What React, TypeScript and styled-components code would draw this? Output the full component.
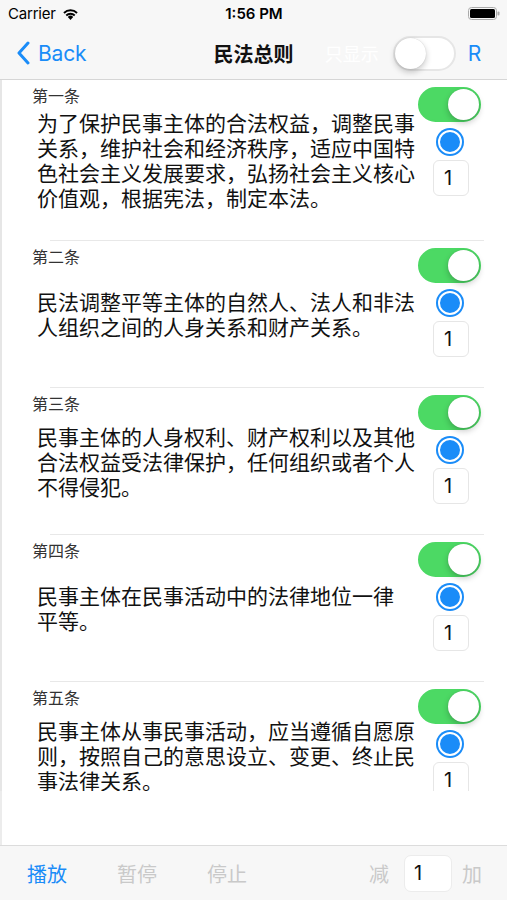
import styled, { createGlobalStyle } from "styled-components";

const GlobalStyle = createGlobalStyle`
  html, body {
    margin: 0;
    padding: 0;
    background: #fff;
  }
  body {
    font-family: Inter, "Noto Sans CJK SC", sans-serif;
    -webkit-font-smoothing: antialiased;
  }
`;

const BLUE = "#1a8cf8";

const articles = [
  {
    title: "第一条",
    lines: [
      "为了保护民事主体的合法权益，调整民事",
      "关系，维护社会和经济秩序，适应中国特",
      "色社会主义发展要求，弘扬社会主义核心",
      "价值观，根据宪法，制定本法。",
    ],
  },
  {
    title: "第二条",
    lines: [
      "民法调整平等主体的自然人、法人和非法",
      "人组织之间的人身关系和财产关系。",
    ],
  },
  {
    title: "第三条",
    lines: [
      "民事主体的人身权利、财产权利以及其他",
      "合法权益受法律保护，任何组织或者个人",
      "不得侵犯。",
    ],
  },
  {
    title: "第四条",
    lines: ["民事主体在民事活动中的法律地位一律", "平等。"],
  },
  {
    title: "第五条",
    lines: [
      "民事主体从事民事活动，应当遵循自愿原",
      "则，按照自己的意思设立、变更、终止民",
      "事法律关系。",
    ],
  },
];

const WifiIcon = () => (
  <svg width="17" height="12" viewBox="0 0 17 12">
    <path d="M8.5 12 L5.8 8.9 A3.9 3.9 0 0 1 11.2 8.9 Z" fill="#000" />
    <path d="M3.6 6.7 A7 7 0 0 1 13.4 6.7 L12.1 8.2 A5 5 0 0 0 4.9 8.2 Z" fill="#000" />
    <path d="M1.3 4.2 A10.3 10.3 0 0 1 15.7 4.2 L14.4 5.7 A8.3 8.3 0 0 0 2.6 5.7 Z" fill="#000" />
  </svg>
);

const BatteryIcon = () => (
  <svg width="32" height="13" viewBox="0 0 32 13">
    <rect x="0.5" y="0.5" width="28" height="12" rx="3" fill="none" stroke="#aaa" />
    <rect x="2" y="2" width="25" height="9" rx="1.5" fill="#000" />
    <rect x="29.5" y="4.5" width="2" height="4" rx="1" fill="#aaa" />
  </svg>
);

const Chevron = () => (
  <svg width="14" height="24" viewBox="0 0 14 24">
    <path
      d="M12 2 L3 12 L12 22"
      fill="none"
      stroke={BLUE}
      strokeWidth="3"
      strokeLinecap="round"
      strokeLinejoin="round"
    />
  </svg>
);

export default function App() {
  return (
    <Page>
      <GlobalStyle />
      <Header>
        <StatusBar>
          <Carrier>
            Carrier <WifiIcon />
          </Carrier>
          <Clock>1:56 PM</Clock>
          <Battery>
            <BatteryIcon />
          </Battery>
        </StatusBar>
        <NavBar>
          <NavLeft>
            <Chevron />
            <NavButton>Back</NavButton>
          </NavLeft>
          <Title>民法总则</Title>
          <NavRight>
            <Ghost>只显示</Ghost>
            <Switch $on={false} />
            <NavButton>R</NavButton>
          </NavRight>
        </NavBar>
      </Header>

      <List>
        {articles.map((a, i) => (
          <Item key={a.title}>
            {i > 0 && <Separator />}
            <Row>
              <Main>
                <Label>{a.title}</Label>
                <Body>
                  {a.lines.map((l) => (
                    <Line key={l}>{l}</Line>
                  ))}
                </Body>
              </Main>
              <Controls>
                <Switch $on />
                <Radio />
                <CountBox>1</CountBox>
              </Controls>
            </Row>
          </Item>
        ))}
      </List>
      <Filler />

      <Toolbar>
        <ToolGroup>
          <ToolButton $active>播放</ToolButton>
          <ToolButton>暂停</ToolButton>
          <ToolButton>停止</ToolButton>
        </ToolGroup>
        <Stepper>
          <ToolButton>减</ToolButton>
          <StepInput>1</StepInput>
          <ToolButton>加</ToolButton>
        </Stepper>
      </Toolbar>
    </Page>
  );
}

const Page = styled.div`
  width: 507px;
  height: 900px;
  display: flex;
  flex-direction: column;
  overflow: hidden;
  background: #fff;
`;

const Header = styled.header`
  background: #f7f7f7;
  border-bottom: 1px solid #d6d6d6;
`;

const StatusBar = styled.div`
  height: 27px;
  display: grid;
  grid-template-columns: 1fr auto 1fr;
  align-items: center;
  padding: 0 7px 0 8px;
  font-size: 15px;
  color: #000;
`;

const Carrier = styled.div`
  display: flex;
  align-items: center;
  gap: 6px;
  letter-spacing: -0.2px;
`;

const Clock = styled.div`
  font-weight: 600;
`;

const Battery = styled.div`
  display: flex;
  justify-content: flex-end;
`;

const NavBar = styled.nav`
  height: 52px;
  display: grid;
  grid-template-columns: 1fr auto 1fr;
  align-items: center;
`;

const NavLeft = styled.div`
  display: flex;
  align-items: center;
  gap: 8px;
  padding-left: 16px;
`;

const NavButton = styled.span`
  font-size: 21px;
  color: ${BLUE};
  letter-spacing: -0.2px;
`;

const Title = styled.h1`
  margin: 0;
  font-size: 20px;
  font-weight: 600;
  color: #111;
`;

const NavRight = styled.div`
  display: flex;
  align-items: center;
  justify-content: flex-end;
  gap: 12px;
  padding-right: 26px;
`;

const Ghost = styled.span`
  font-size: 18px;
  color: #fff;
  margin-right: 2px;
`;

const Switch = styled.div<{ $on: boolean }>`
  position: relative;
  box-sizing: border-box;
  width: 63px;
  height: 35px;
  border-radius: 18px;
  background: ${(p) => (p.$on ? "#4cd964" : "#fff")};
  border: 2px solid ${(p) => (p.$on ? "#4cd964" : "#e6e6e6")};
  flex-shrink: 0;

  &::after {
    content: "";
    position: absolute;
    top: 0;
    ${(p) => (p.$on ? "right: 0;" : "left: 0;")}
    width: 31px;
    height: 31px;
    border-radius: 50%;
    background: #fff;
    box-shadow: 0 3px 6px rgba(0, 0, 0, 0.22), 0 0 1px rgba(0, 0, 0, 0.2);
  }
`;

const List = styled.main`
  height: 711px;
  overflow: hidden;
  border-left: 2px solid #e6e6e6;
  flex-shrink: 0;
`;

const Filler = styled.div`
  flex: 1;
  border-left: 2px solid #ececec;
`;

const Item = styled.section``;

const Separator = styled.div`
  height: 1px;
  background: #e8e8e8;
  margin: 0 23px 0 48px;
`;

const Row = styled.div`
  display: flex;
  padding: 0 26px 0 30px;
`;

const Main = styled.div`
  flex: 1;
  padding: 3px 0 28px;
`;

const Label = styled.div`
  font-family: "Noto Sans CJK SC", sans-serif;
  font-size: 16px;
  line-height: 25px;
  color: #333;
`;

const Body = styled.div`
  box-sizing: border-box;
  min-height: 90px;
  padding: 2px 0 2px 5px;
  display: flex;
  flex-direction: column;
  justify-content: center;
  font-family: "Noto Sans CJK SC", sans-serif;
  font-size: 21px;
  line-height: 25px;
  color: #111;
`;

const Line = styled.span`
  display: block;
  white-space: nowrap;
`;

const Controls = styled.div`
  width: 63px;
  padding-top: 7px;
  display: flex;
  flex-direction: column;
  align-items: center;
`;

const Radio = styled.div`
  margin-top: 8px;
  width: 20px;
  height: 20px;
  border-radius: 50%;
  background: ${BLUE};
  border: 2px solid #fff;
  box-shadow: 0 0 0 2px ${BLUE};
`;

const CountBox = styled.div`
  box-sizing: border-box;
  margin-top: 6px;
  margin-left: 3px;
  width: 36px;
  height: 36px;
  border: 1px solid #e6e6e6;
  border-radius: 6px;
  padding-left: 10px;
  font-size: 20px;
  line-height: 34px;
  color: #111;
`;

const Toolbar = styled.footer`
  height: 55px;
  box-sizing: border-box;
  flex-shrink: 0;
  background: #f7f7f7;
  border-top: 1px solid #dcdcdc;
  display: flex;
  align-items: center;
  justify-content: space-between;
  padding: 0 25px 0 27px;
`;

const ToolGroup = styled.div`
  display: flex;
  gap: 50px;
`;

const ToolButton = styled.span<{ $active?: boolean }>`
  font-family: "Noto Sans CJK SC", sans-serif;
  font-size: 20px;
  color: ${(p) => (p.$active ? BLUE : "#c9c9c9")};
`;

const Stepper = styled.div`
  display: flex;
  align-items: center;
  gap: 10px;

  & > :first-child {
    margin-right: 5px;
  }
`;

const StepInput = styled.div`
  box-sizing: border-box;
  width: 48px;
  height: 37px;
  background: #fff;
  border: 1px solid #ececec;
  border-radius: 7px;
  padding-left: 9px;
  font-size: 20px;
  line-height: 35px;
  color: #111;
`;
